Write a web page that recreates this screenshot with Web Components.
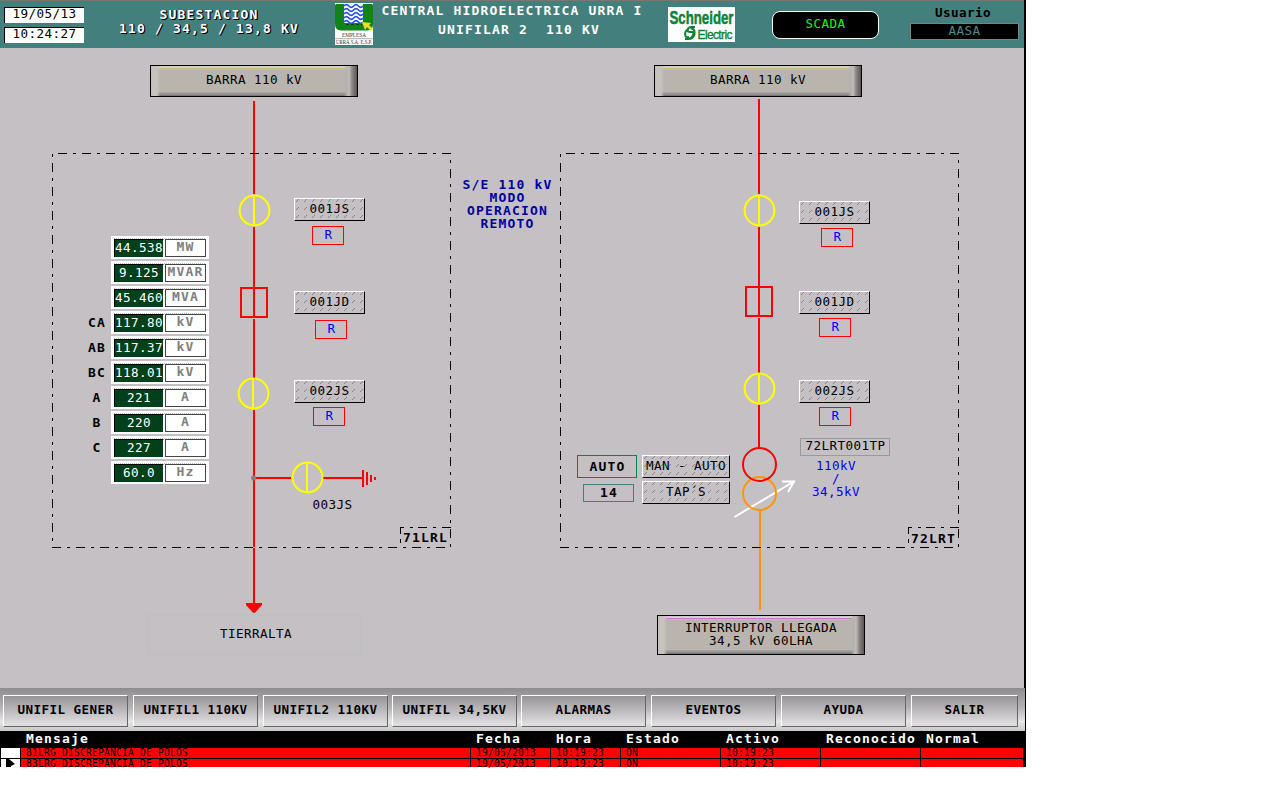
<!DOCTYPE html>
<html lang="es">
<head>
<meta charset="utf-8">
<title>Unifilar 2 110 kV</title>
<style>
html,body{margin:0;background:#fff}
body{font-family:"DejaVu Sans Mono","Liberation Mono",monospace;width:1280px;height:800px;overflow:hidden}
</style>
</head>
<body>
<scada-screen></scada-screen>
<script>
const define = (name, html, init) => customElements.define(name, class extends HTMLElement {
  constructor() {
    super();
    const t = document.createElement('template');
    t.innerHTML = html;
    this.attachShadow({mode: 'open'}).append(t.content.cloneNode(true));
  }
  connectedCallback() { if (init) init.call(this, this.shadowRoot); }
});

/* Places a node on the free diagram canvas, whose top edge is 48px below the screen's */
function place() {
  const n = k => Number(this.getAttribute(k));
  this.style.left = n('x') + 'px';
  this.style.top = (n('y') - 48) + 'px';
  if (this.hasAttribute('w')) this.style.width = n('w') + 'px';
  if (this.hasAttribute('h')) this.style.height = n('h') + 'px';
}

const T8 = 'font-size:12.6px;letter-spacing:.414px;line-height:13px;white-space:pre;';
const T9 = 'font-size:13px;letter-spacing:1.17px;line-height:13px;white-space:pre;';

/* Free text, centred on x,y */
define('scada-text', `<style>
:host{position:absolute;transform:translate(-50%,-50%);margin-top:-1px;text-align:center;color:var(--c,#000);${T8}}
:host([wide]){${T9}font-weight:bold}
</style><slot></slot>`, place);

/* Plain outlined box */
define('outline-box', `<style>
:host{position:absolute;box-sizing:border-box;border:1px solid var(--b,#f00);display:flex;align-items:center;justify-content:center;padding-bottom:3px;padding-left:1px;color:var(--c,#00f);${T8}}
:host([wide]){${T9}font-weight:bold;padding-bottom:1px}
</style><slot></slot>`, place);

/* Hatched command button */
define('hatch-button', `<style>
:host{position:absolute;box-sizing:border-box;border:1px solid;border-color:#fff #000 #000 #fff;display:grid;${T8}}
svg,span{grid-area:1/1}
svg{width:100%;height:100%;min-height:0}
span{place-self:center;padding-bottom:2px}
</style><svg shape-rendering="crispEdges"><defs><pattern id="p" width="8" height="8" patternUnits="userSpaceOnUse"><path d="M1 2h1v1h-1zM2 1h1v1h-1zM3 0h1v1h-1z" fill="#858385"/></pattern></defs><rect width="100%" height="100%" fill="url(#p)"/></svg><span><slot></slot></span>`, place);

/* Metallic bevelled plate */
define('bevel-plate', `<style>
:host{position:absolute;box-sizing:border-box;border:1px solid #000;display:flex;align-items:center;justify-content:center;text-align:center;padding-bottom:3px;${T8}
background:linear-gradient(var(--line,#c8b878),var(--line,#c8b878)) 8px 2px/calc(100% - 20px) 1px no-repeat,
linear-gradient(90deg,#c4c0bd 0,#c8c3be 3px,#c6c2be 6px,transparent 9px,transparent calc(100% - 13px),#b4b0ac calc(100% - 10px),#c2beba calc(100% - 8px),#8d8785 calc(100% - 5px),#5c5557 100%),
linear-gradient(#cdc9c8 0,#d8d4d0 2px,#b9b4ae 4px,#b9b4ae calc(100% - 4px),#9a9a9c calc(100% - 3px),#8a8a8c calc(100% - 1px),#666 100%)}
</style><slot></slot>`, place);

define('meter-row', `<style>
:host{display:grid;grid-template-columns:28px 98px;height:23px;align-items:center}
b{${T9}text-align:center;padding-bottom:1px;justify-self:center}
.card{box-sizing:border-box;height:23px;background:#fff;padding:3px;display:grid;grid-template-columns:50px 41px;column-gap:1px;background-image:repeating-linear-gradient(90deg,#bbb 0 1px,#fff 1px 2px);background-size:92px 1px;background-position:3px 2px;background-repeat:no-repeat}
.v,.u{box-sizing:border-box;height:18px;display:flex;justify-content:center;align-items:center}
.v{background:#00401a;border-left:1px solid #000;border-top:1px solid #000;color:#fff;${T8}border-right:1px solid #fff;padding-bottom:2px}
.u{border:1px solid #444;color:#808080;${T9}font-weight:bold;padding-bottom:3px}
</style><b></b><div class="card"><div class="v"></div><div class="u"></div></div>`, function (r) {
  r.querySelector('b').textContent = this.getAttribute('label') || '';
  r.querySelector('.v').textContent = this.getAttribute('value');
  r.querySelector('.u').textContent = this.getAttribute('unit');
});

define('meter-panel', `<style>:host{position:absolute;display:flex;flex-direction:column;gap:2px}</style>
<meter-row value="44.538" unit="MW"></meter-row>
<meter-row value="9.125" unit="MVAR"></meter-row>
<meter-row value="45.460" unit="MVA"></meter-row>
<meter-row label="CA" value="117.80" unit="kV"></meter-row>
<meter-row label="AB" value="117.37" unit="kV"></meter-row>
<meter-row label="BC" value="118.01" unit="kV"></meter-row>
<meter-row label="A" value="221" unit="A"></meter-row>
<meter-row label="B" value="220" unit="A"></meter-row>
<meter-row label="C" value="227" unit="A"></meter-row>
<meter-row value="60.0" unit="Hz"></meter-row>`, place);

define('urra-logo', `<style>:host{display:block;width:38px;height:42px}svg{display:block}</style>
<svg width="38" height="42" viewBox="0 0 38 42"><rect width="38" height="42" fill="#fff"/>
<path d="M1 1H37Q38 1 38 3V21Q38 27.5 32 27.5H6Q0 27.5 0 21V3Q0 1 1 1Z" fill="#12821b"/>
<rect x="9" y="1" width="19" height="19" fill="#fff"/>
<g fill="none" stroke="#2450e8" stroke-width="1.7"><path d="M9 3q2.4-2.6 4.8 0t4.8 0t4.8 0t4.6 0"/><path d="M9 7q2.4-2.6 4.8 0t4.8 0t4.8 0t4.6 0"/><path d="M9 11q2.4-2.6 4.8 0t4.8 0t4.8 0t4.6 0"/><path d="M9 15q2.4-2.6 4.8 0t4.8 0t4.8 0t4.6 0"/><path d="M9 19q2.4-2.6 4.8 0t4.8 0t4.8 0t4.6 0"/></g>
<path d="M11 21.5H27" stroke="#043a08" stroke-dasharray="3 2"/>
<path d="M27 19L36 20L34 22L38 26L36 28L32 24L30 27Z" fill="#e8e020"/>
<g font-family="Liberation Serif" font-size="5.3" fill="#333"><text x="7" y="34" textLength="24" lengthAdjust="spacingAndGlyphs">EMPLESA</text><text x="1" y="40.8" textLength="36" lengthAdjust="spacingAndGlyphs">URRÁ S.A. E.S.P.</text></g>
<path d="M0 35.7H38" stroke="#999" stroke-width=".8"/></svg>`);

define('schneider-logo', `<style>:host{display:block;width:67px;height:35px}svg{display:block}</style>
<svg width="67" height="35" viewBox="0 0 67 35"><rect width="67" height="35" fill="#fff"/>
<g fill="#0c8434" stroke="#0c8434" font-family="Liberation Sans"><text x="1.5" y="17" font-size="17.5" font-weight="bold" stroke-width=".5" textLength="64" lengthAdjust="spacingAndGlyphs">Schneider</text>
<text x="29.5" y="31.5" font-size="12" stroke-width=".35" textLength="35" lengthAdjust="spacing">Electric</text></g>
<g fill="none" stroke="#0c8434" stroke-width="2"><path d="M27 20H23.5Q20 20 19.6 23Q19.4 25 22 25H24.5Q26 25.5 25 28Q24 31.5 20.5 32H17"/><path d="M22 32Q27 30 26.6 25Q26 21 22.5 21.5"/><path d="M20 22Q16 25 17.5 29Q18.5 31 21 30"/></g></svg>`);

define('scada-header', `<style>
:host{display:flex;box-sizing:border-box;height:48px;width:1024px;background:#437f7d;border-top:1px solid #77776a;align-items:flex-start}
.clock{margin:6px 0 0 4px;display:flex;flex-direction:column;gap:4px;width:80px}
.clock div{box-sizing:border-box;height:16px;background:#fff;border:solid #000;border-width:1px 0 0 1px;text-align:center;${T8}line-height:12px}
.sub{margin:7px 0 0 34px;width:182px;color:#fff;text-align:center;${T9}line-height:14px;font-weight:bold;text-shadow:1px 1px #000,1px 0 #000}
urra-logo{margin:2px 0 0 35px}
.title{margin:3px 0 0 8px;width:262px;color:#fff;text-align:center;${T9}line-height:19px;font-weight:bold;height:40px}
.title span{display:block}.title span:first-child{line-height:14px;margin-bottom:2px}.title span+span{padding-left:14px}
schneider-logo{margin:6px 0 0 25px}
.mode{box-sizing:border-box;margin:10px 0 0 37px;width:107px;height:28px;background:#000;border:1px solid #fff;border-radius:8px;color:#0f0;display:flex;align-items:center;justify-content:center;padding-bottom:4px;${T8}}
.user{margin:5px 0 0 31px;width:109px;text-align:center;${T8}font-weight:bold}
.user span{display:block;padding-right:3px}
.user div{box-sizing:border-box;height:17px;margin-top:4px;background:#000;border:1px solid #808080;color:#4c8a88;font-weight:normal;line-height:14px}
</style>
<div class="clock"><div>19/05/13</div><div>10:24:27</div></div>
<div class="sub">SUBESTACION
110 / 34,5 / 13,8 KV</div>
<urra-logo></urra-logo>
<div class="title"><span>CENTRAL HIDROELECTRICA URRA I</span><span>UNIFILAR 2  110 KV</span></div>
<schneider-logo></schneider-logo>
<div class="mode">SCADA</div>
<div class="user"><span>Usuario</span><div>AASA</div></div>`);

define('diagram-wires', `<style>:host{display:block}svg{display:block}</style>
<svg width="1024" height="640" viewBox="0 48 1024 640" fill="none" stroke-width="2">
<g stroke="#f00"><path d="M254 101V194M254 227V378M254 410V547M254 548V604M254 478H291M323 478H363M759 99V194M759 227V373M759 405V448"/>
<path d="M241 288H267V317H241ZM746 287H772V316H746Z"/>
<path d="M363 470V487M367 472V485M371 475V482M375 477V480"/></g>
<path d="M253 318.5H255M758 317.5H760" stroke="#c4c0c4" stroke-width="1"/>
<path d="M246 603H262V605L255 612.8H253L246 605Z" fill="#f00"/>
<path d="M760 511V610" stroke="#ff9500"/>
<g stroke="#ff0"><circle cx="254.5" cy="210.5" r="14.9"/><path d="M254 196V226M253 379V408M307 463V492M759 196V226M759 374V403"/><circle cx="253.5" cy="393.5" r="14.9"/><circle cx="307.5" cy="477.5" r="14.9"/><circle cx="759.5" cy="210.5" r="14.9"/><circle cx="759.5" cy="388.5" r="14.9"/></g>
<circle cx="253.7" cy="478" r="2.6" fill="#808080"/>
<path d="M734.5 517L793 482M782 481.5H794L788 492" stroke="#fff"/>
<circle cx="759.5" cy="493.5" r="16.5" stroke="#ff9500"/><circle cx="759.5" cy="464.5" r="16.5" stroke="#f00"/>
<g stroke="#000" stroke-width="1" stroke-dasharray="9 6 3 6" shape-rendering="crispEdges">
<path d="M58 153.5H451M566 153.5H959"/><path d="M52.5 163V547M560.5 163V547"/><path d="M52 547.5H451M560 547.5H959"/><path d="M450.5 169V547M958.5 169V547"/>
<path d="M52.5 154V157M560.5 154V157M450.5 160V163M958.5 160V163" stroke-dasharray="none"/>
<path d="M418 527.5H451M926 527.5H959"/><path d="M400 527.5H404M410 527.5H413M908 527.5H912M918 527.5H921M400.5 527V534M400.5 539V543M908.5 527V534M908.5 539V543" stroke-dasharray="none"/></g>
</svg>`);

define('scada-diagram', `<style>
:host{display:block;position:relative;width:1024px;height:640px;background:#c4c0c4}
.green{--b:#00854a;--c:#000}.teal{--b:#437f7d;--c:#000}.grey{--b:#999;--c:#000}.faint{--b:#bfc0bf;border-width:3px}
.blue{--c:#00f}.navy{--c:#0000a0}.pink{--line:#c878c8}
</style>
<diagram-wires></diagram-wires>
<bevel-plate x="150" y="65" w="208" h="32">BARRA 110 kV</bevel-plate>
<bevel-plate x="654" y="65" w="208" h="32">BARRA 110 kV</bevel-plate>
<bevel-plate class="pink" x="657" y="615" w="208" h="40">INTERRUPTOR LLEGADA
34,5 kV 60LHA</bevel-plate>
<outline-box class="faint" x="147" y="614" w="216" h="42"></outline-box>
<scada-text x="256" y="634">TIERRALTA</scada-text>
<meter-panel x="83" y="236"></meter-panel>
<hatch-button x="294" y="198" w="71" h="23">001JS</hatch-button><outline-box x="312" y="226" w="32" h="19">R</outline-box>
<hatch-button x="294" y="291" w="71" h="23">001JD</hatch-button><outline-box x="315" y="320" w="32" h="19">R</outline-box>
<hatch-button x="294" y="380" w="71" h="23">002JS</hatch-button><outline-box x="313" y="407" w="32" h="19">R</outline-box>
<scada-text x="332.5" y="505">003JS</scada-text>
<scada-text wide x="425.5" y="537.5">71LRL</scada-text>
<scada-text wide class="navy" x="507.5" y="204.5">S/E 110 kV
MODO
OPERACION
REMOTO</scada-text>
<hatch-button x="799" y="201" w="71" h="23">001JS</hatch-button><outline-box x="821" y="228" w="32" h="19">R</outline-box>
<hatch-button x="799" y="291" w="71" h="23">001JD</hatch-button><outline-box x="819" y="318" w="32" h="19">R</outline-box>
<hatch-button x="799" y="380" w="71" h="23">002JS</hatch-button><outline-box x="819" y="407" w="32" h="19">R</outline-box>
<outline-box class="grey" x="800" y="438" w="90" h="18">72LRT001TP</outline-box>
<scada-text class="blue" x="836" y="479">110kV
/
34,5kV</scada-text>
<outline-box wide class="green" x="577" y="455" w="60" h="23">AUTO</outline-box>
<outline-box wide class="teal" x="583" y="484" w="51" h="18">14</outline-box>
<hatch-button x="642" y="455" w="88" h="23">MAN - AUTO</hatch-button>
<hatch-button x="642" y="481" w="88" h="23">TAP´S</hatch-button>
<scada-text wide x="933.5" y="538.5">72LRT</scada-text>`);

define('nav-button', `<style>
:host{box-sizing:border-box;height:32px;border:1px solid;border-color:#fff #666 #666 #fff;background:linear-gradient(#969496,#e0dee0 95%);display:flex;align-items:center;justify-content:center;padding-bottom:3px;${T8}font-weight:bold}
</style><slot></slot>`);

define('nav-bar', `<style>
:host{box-sizing:border-box;width:1025px;height:43px;padding:7px 0 0 3px;display:grid;grid-template-columns:130px 130px 129px 129px 130px 130px 130px 112px;background:linear-gradient(#8e8c8e,#b4b3b4 45%,#e6e6e6 78%,#c8c8c8)}
nav-button{width:125px}nav-button:last-child{width:107px}
</style><nav-button>UNIFIL GENER</nav-button><nav-button>UNIFIL1 110KV</nav-button><nav-button>UNIFIL2 110KV</nav-button><nav-button>UNIFIL 34,5KV</nav-button><nav-button>ALARMAS</nav-button><nav-button>EVENTOS</nav-button><nav-button>AYUDA</nav-button><nav-button>SALIR</nav-button>`);

define('alarm-table', `<style>
:host{display:block;width:1026px;height:36px;background:#000}
.r{display:grid;grid-template-columns:19px 449px 79px 69px 99px 99px 99px 102px;column-gap:1px;padding-left:1px;height:10px;margin-bottom:1px}
.r>*{background:#f00;padding-left:5px;font-size:9.6px;letter-spacing:.22px;line-height:10px;height:10px;white-space:pre}
.r>:first-child{background:#fff;padding:0}
.last,.last>*{height:8px;margin:0}
.h{height:17px;margin:0}
.h>*,.h>:first-child{background:#000;color:#fff;${T9}line-height:16px;height:17px;font-weight:bold}
svg{display:block}
</style>
<div class="r h"><span></span><span>Mensaje</span><span>Fecha</span><span>Hora</span><span>Estado</span><span>Activo</span><span>Reconocido</span><span>Normal</span></div>
<div class="r"><span></span><span>81LRG DISCREPANCIA DE POLOS</span><span>19/05/2013</span><span>10:19:23</span><span>ON</span><span>10:19:23</span><span></span><span></span></div>
<div class="r last"><span><svg width="19" height="8"><path d="M5 0H8L14 5L10 7V8H5Z"/></svg></span><span>83LRG DISCREPANCIA DE POLOS</span><span>19/05/2013</span><span>10:19:23</span><span>ON</span><span>10:19:23</span><span></span><span></span></div>`);

define('scada-screen', `<style>
:host{display:flex;flex-direction:column;width:1026px;height:767px;background:#000}
</style><scada-header></scada-header><scada-diagram></scada-diagram><nav-bar></nav-bar><alarm-table></alarm-table>`);
</script>
</body>
</html>
